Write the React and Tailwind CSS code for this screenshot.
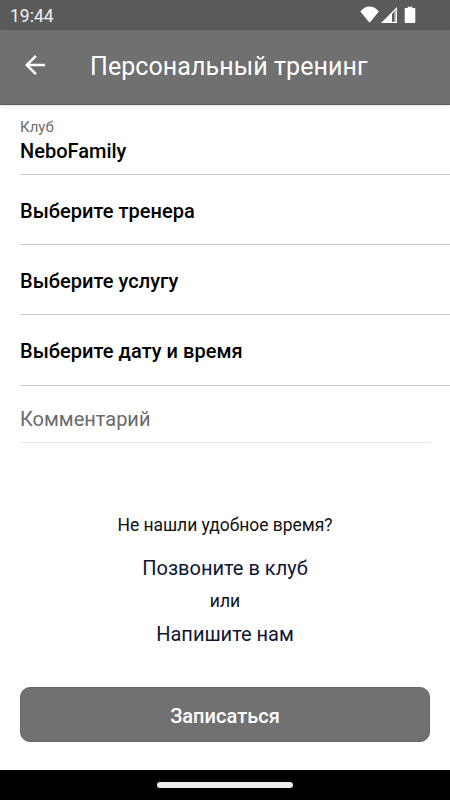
const StatusBar = () => (
    <div className="flex h-[30px] shrink-0 items-center justify-between bg-[#5a5a5a] pl-[10px] pr-[34px]">
        <span className="pt-px text-[17.5px] leading-[30px] text-[#f2f2f2]">19:44</span>
        <svg width="56" height="18" viewBox="0 0 56 18" fill="#fff">
            <path d="M.3 5.600C2.900 2.400 6 .5 9.600 .5s6.700 1.900 9.300 5.100L9.600 16.800Z" />
            <path
                fillRule="evenodd"
                d="M37 1V17H21ZM32 7.900V15.800H35.800V3.900Z"
            />
            <path fill="#d0d0d0" d="M34.400 6v9.800h1.400V4.500Z" />
            <path d="M47.700 .8h4.600v1.300h2c.6 0 1 .4 1 1v13c0 .6-.4 1-1 1h-8.600c-.6 0-1-.4-1-1v-13c0-.6.4-1 1-1h2Z" />
        </svg>
    </div>
);

const Header = () => (
    <header className="flex h-[75px] shrink-0 items-center border-b border-[#5c5c5c] bg-[#707070] pl-5 shadow-[0_1px_4px_rgba(0,0,0,0.12)]">
        <button aria-label="Назад" className="mr-10 mb-1">
            <svg width="30" height="30" viewBox="0 0 24 24" fill="#fff">
                <path d="M20 11H7.830l5.590-5.590L12 4l-8 8 8 8 1.410-1.410L7.830 13H20v-2z" />
            </svg>
        </button>
        <h1 className="text-[25px] leading-[30px] tracking-[0.08px] text-white">
            Персональный тренинг
        </h1>
    </header>
);

const fields = [
    { title: "Выберите тренера", size: "h-[70px]" },
    { title: "Выберите услугу", size: "h-[70px]" },
    { title: "Выберите дату и время", size: "h-[71px]" },
];

const App = () => {
    return (
        <div className="flex h-[800px] w-[450px] flex-col overflow-hidden bg-white font-['Roboto',sans-serif]">
            <StatusBar />
            <Header />

            <main className="flex flex-1 flex-col">
                <div className="ml-5 flex h-[70px] flex-col border-b border-[#c9c9c9] pt-[13px]">
                    <span className="text-[15px] leading-[18px] text-[#6b6b6b]">
                        Клуб
                    </span>
                    <span className="mt-[3px] text-xl leading-6 font-medium text-black">
                        NeboFamily
                    </span>
                </div>
                {fields.map((field) => (
                    <div
                        key={field.title}
                        className={`ml-5 flex items-center border-b border-[#c9c9c9] pt-0.5 text-xl font-medium tracking-[0.04px] text-black ${field.size}`}
                    >
                        {field.title}
                    </div>
                ))}
                <div className="mx-5 flex h-[57px] items-center border-b border-[#e9e9e9] pt-[10px] text-xl text-[#6a6a6a]">
                    Комментарий
                </div>

                <div className="mt-[71px] flex flex-col items-center text-[#111]">
                    <p className="text-[17.5px] leading-[22px] tracking-[-0.04px]">
                        Не нашли удобное время?
                    </p>
                    <button className="mt-5 text-xl leading-6 text-[#0d1533]">
                        Позвоните в клуб
                    </button>
                    <p className="mt-[10px] text-[17.5px] leading-[22px]">или</p>
                    <button className="mt-[10px] text-xl leading-6 text-[#0d1533]">
                        Напишите нам
                    </button>
                </div>

                <button className="mx-5 mt-auto mb-[28px] h-[55px] rounded-[10px] border border-[#666] bg-[#717171] pt-0.5 text-xl font-medium tracking-[0.04px] text-white">
                    Записаться
                </button>
            </main>

            <div className="flex h-[30px] shrink-0 items-center justify-center bg-black">
                <div className="h-[6px] w-[136px] rounded-full bg-[#ececec]" />
            </div>
        </div>
    );
};

export default App;
